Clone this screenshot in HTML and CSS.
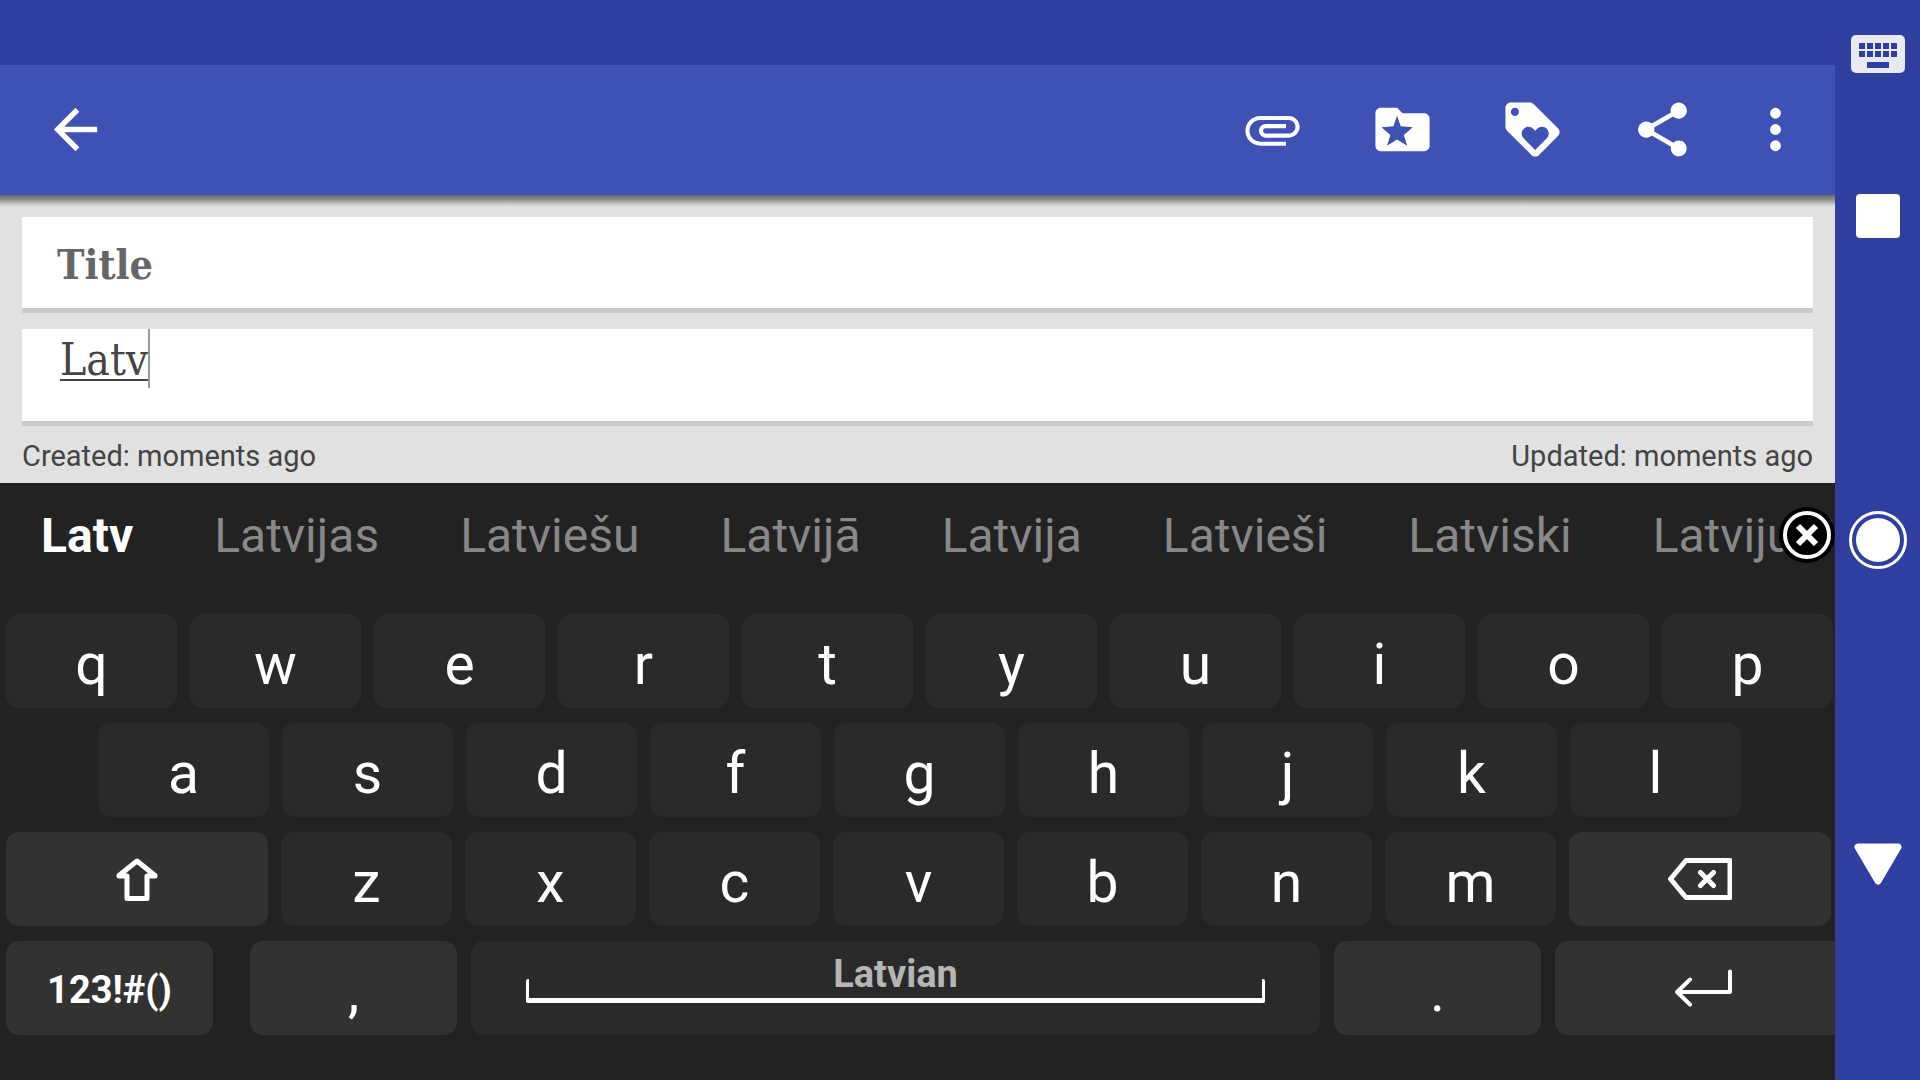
FILE: index.html
```html
<!DOCTYPE html>
<html lang="en">
<head>
<meta charset="utf-8">
<title>Note editor</title>
<link rel="stylesheet" href="styles.css">
</head>
<body>
<div class="device">
  <div class="screen">
    <div class="status-bar"></div>
    <header class="app-bar">
      <button class="bar-button back" aria-label="Back"><svg class="icon" viewBox="0 0 24 24"><path d="M20 11H7.83l5.59-5.59L12 4l-8 8 8 8 1.41-1.41L7.83 13H20v-2z"/></svg></button>
      <button class="bar-button" aria-label="Attach"><svg class="icon" viewBox="0 0 24 24"><path d="M2 12.5C2 9.46 4.46 7 7.5 7H18c2.21 0 4 1.79 4 4s-1.79 4-4 4H9.5C8.12 15 7 13.88 7 12.5S8.12 10 9.5 10H17v1.500H9.410c-1.200 0-1.200 2 0 2H18c1.380 0 2.500-1.120 2.500-2.500S19.380 8.500 18 8.500H7.500c-2.210 0-4 1.790-4 4s1.790 4 4 4H17V18H7.500C4.460 18 2 15.540 2 12.500z"/></svg></button>
      <button class="bar-button" aria-label="Folder"><svg class="icon" viewBox="0 0 24 24"><path fill-rule="evenodd" d="M20 6h-8l-2-2H4c-1.100 0-2 .9-2 2v12c0 1.100.9 2 2 2h16c1.100 0 2-.9 2-2V8c0-1.100-.9-2-2-2zM10 6.900l1.350 3.900 4.450.4-3.300 2.800 1.200 4L10 15.700 6.300 18l1.200-4-3.300-2.800 4.450-.4z"/></svg></button>
      <button class="bar-button" aria-label="Tags"><svg class="icon" viewBox="0 0 24 24"><path d="M21.41 11.58l-9-9C12.05 2.22 11.55 2 11 2H4c-1.1 0-2 .9-2 2v7c0 .55.22 1.05.59 1.42l9 9c.36.36.86.58 1.41.58.55 0 1.05-.22 1.41-.59l7-7c.37-.36.59-.86.59-1.41 0-.55-.23-1.06-.59-1.42zM5.500 7C4.670 7 4 6.330 4 5.500S4.670 4 5.500 4 7 4.670 7 5.500 6.330 7 5.500 7zm11.770 8.270L13 19.540l-4.270-4.270C8.280 14.810 8 14.190 8 13.500c0-1.380 1.120-2.500 2.500-2.500.69 0 1.320.28 1.770.74l.73.72.73-.73c.45-.45 1.080-.73 1.770-.73 1.380 0 2.500 1.120 2.500 2.500 0 .69-.28 1.320-.73 1.770z"/></svg></button>
      <button class="bar-button" aria-label="Share"><svg class="icon" viewBox="0 0 24 24"><path d="M18 16.080c-.76 0-1.440.3-1.960.77L8.910 12.700c.05-.23.09-.46.09-.7s-.04-.47-.09-.7l7.050-4.110c.54.5 1.250.81 2.040.81 1.660 0 3-1.340 3-3s-1.340-3-3-3-3 1.340-3 3c0 .24.04.47.09.7L8.040 9.810C7.500 9.310 6.790 9 6 9c-1.660 0-3 1.340-3 3s1.340 3 3 3c.79 0 1.500-.31 2.040-.81l7.120 4.160c-.05.21-.08.43-.08.65 0 1.610 1.310 2.920 2.920 2.920s2.920-1.310 2.920-2.920-1.310-2.920-2.920-2.920z"/></svg></button>
      <button class="bar-button more" aria-label="More options"><svg class="icon" viewBox="0 0 24 24"><circle cx="12" cy="6" r="2"/><circle cx="12" cy="12" r="2"/><circle cx="12" cy="18" r="2"/></svg></button>
    </header>
    <main class="note">
      <input class="field title" type="text" placeholder="Title" aria-label="Title">
      <div class="body-wrap">
        <textarea class="field body" rows="1" spellcheck="false" aria-label="Note">Latv</textarea>
        <span class="caret"></span>
      </div>
      <div class="dates"><span>Created: moments ago</span><span>Updated: moments ago</span></div>
    </main>
    <section class="keyboard" aria-label="Keyboard">
      <div class="suggestions">
        <button class="word typed">Latv</button>
        <button class="word">Latvijas</button>
        <button class="word">Latviešu</button>
        <button class="word">Latvijā</button>
        <button class="word">Latvija</button>
        <button class="word">Latvieši</button>
        <button class="word">Latviski</button>
        <button class="word">Latviju</button>
        <button class="dismiss" aria-label="Dismiss suggestions"><svg viewBox="0 0 56 56"><circle cx="28" cy="28" r="28" fill="#000"/><circle cx="28" cy="28" r="22" fill="none" stroke="#fff" stroke-width="4"/><path d="M19 19l18 18M37 19L19 37" stroke="#fff" stroke-width="6"/></svg></button>
      </div>
      <div class="row row-top">
        <button class="key">q</button><button class="key">w</button><button class="key">e</button><button class="key">r</button><button class="key">t</button><button class="key">y</button><button class="key">u</button><button class="key">i</button><button class="key">o</button><button class="key">p</button>
      </div>
      <div class="row row-home">
        <button class="key">a</button><button class="key">s</button><button class="key">d</button><button class="key">f</button><button class="key">g</button><button class="key">h</button><button class="key">j</button><button class="key">k</button><button class="key">l</button>
      </div>
      <div class="row row-shift">
        <button class="key wide function" aria-label="Shift"><svg class="line shift" viewBox="0 0 42 43"><path d="M21 3L39 17.500V18H31V40.500H11V18H3V17.500Z"/></svg></button>
        <button class="key">z</button><button class="key">x</button><button class="key">c</button><button class="key">v</button><button class="key">b</button><button class="key">n</button><button class="key">m</button>
        <button class="key wide function" aria-label="Backspace"><svg class="line backspace" viewBox="0 0 64 42"><path d="M62 2.500H18L2.500 21 18 39.500H62ZM32.500 14.500l13 13M45.500 14.500l-13 13"/></svg></button>
      </div>
      <div class="row row-space">
        <button class="key side function symbols">123!#()</button>
        <button class="key side function comma">,</button>
        <button class="key space"><span>Latvian</span><i class="tray"></i></button>
        <button class="key side function">.</button>
        <button class="key enter function" aria-label="Enter"><svg class="line return" viewBox="0 0 58 38"><path d="M56 2.500V23H3M16 10.500L3 23l13 12.500"/></svg></button>
      </div>
    </section>
  </div>
  <nav class="system-nav">
    <button class="nav-button" aria-label="Switch keyboard"><svg class="nav-keyboard" viewBox="0 0 54 38"><path fill="#e9e9f6" fill-rule="evenodd" d="M5 0H49a5 5 0 0 1 5 5V33a5 5 0 0 1-5 5H5a5 5 0 0 1-5-5V5a5 5 0 0 1 5-5ZM8 8v6h6V8zM16 8v6h6V8zM24 8v6h6V8zM32 8v6h6V8zM40 8v6h6V8zM8 16v6h6v-6zM16 16v6h6v-6zM24 16v6h6v-6zM32 16v6h6v-6zM40 16v6h6v-6zM16 27v6h22v-6z"/></svg></button>
    <button class="nav-button" aria-label="Recent apps"><svg class="nav-square" viewBox="0 0 44 44"><rect width="44" height="44" rx="4"/></svg></button>
    <button class="nav-button" aria-label="Home"><svg class="nav-home" viewBox="0 0 58 58"><circle cx="29" cy="29" r="22"/><circle cx="29" cy="29" r="27.500" fill="none" stroke="#fff" stroke-width="3"/></svg></button>
    <button class="nav-button" aria-label="Hide keyboard"><svg class="nav-back" viewBox="0 0 48 42"><path d="M4 4H44L24 38Z" stroke="#fff" stroke-width="7" stroke-linejoin="round"/></svg></button>
  </nav>
</div>
</body>
</html>
```
FILE: styles.css
```css
* { box-sizing: border-box; }

body {
  margin: 0;
  font-family: Roboto, "Noto Sans", sans-serif;
  background: #222;
}

button {
  margin: 0;
  padding: 0;
  border: 0;
  background: none;
  color: inherit;
  font: inherit;
}

svg { display: block; fill: #fff; }

.device { display: flex; min-height: 100vh; }

.screen {
  flex: 1;
  min-width: 0;
  display: flex;
  flex-direction: column;
}

.status-bar { height: 65px; background: #303f9f; }

.app-bar {
  position: relative;
  display: flex;
  height: 130px;
  padding: 0 11px 1px 0;
  background: #3f51b5;
}

.app-bar::after {
  content: "";
  position: absolute;
  top: 100%;
  left: 0;
  right: 0;
  height: 12px;
  background: linear-gradient(rgba(0, 0, 0, .54), rgba(0, 0, 0, .36) 40%, rgba(0, 0, 0, .08) 80%, transparent);
}

.bar-button {
  display: flex;
  align-items: center;
  justify-content: center;
  width: 130px;
}

.bar-button.back { width: 151px; margin-right: auto; }
.bar-button.more { width: 97px; }
.icon { width: 65px; height: 65px; }

.note {
  display: flex;
  flex-direction: column;
  gap: 16px;
  padding: 22px 22px 0;
  background: #e1e1e1;
}

.field {
  display: block;
  width: 100%;
  margin: 0;
  border: 0;
  border-bottom: 5px solid #cacaca;
  border-radius: 0;
  outline: 0;
  background: #fff;
  color: #444;
  font-family: "DejaVu Serif Condensed", "DejaVu Serif", serif;
}

.title {
  height: 96px;
  padding: 4px 35px 0;
  font-size: 41px;
  font-weight: bold;
}

.title::placeholder { color: #666; opacity: 1; }

.body-wrap { position: relative; }

.body {
  height: 97px;
  padding: 0 38px;
  font-size: 44px;
  line-height: 62px;
  resize: none;
  overflow: hidden;
  text-decoration: underline 2px;
  text-underline-offset: 4px;
}

.caret {
  position: absolute;
  top: 0;
  left: 126px;
  width: 2px;
  height: 59px;
  background: #999;
}

.dates {
  display: flex;
  justify-content: space-between;
  height: 57px;
  margin-top: -16px;
  color: #444;
  font-size: 29px;
  line-height: 60px;
}

.keyboard {
  flex: 1;
  display: flex;
  flex-direction: column;
  gap: 15px;
  padding-bottom: 45px;
  background: #222;
  color: #fff;
}

.suggestions {
  position: relative;
  display: flex;
  gap: 81px;
  height: 116px;
  padding-left: 41px;
  overflow: hidden;
  color: #888;
  font-size: 48px;
  line-height: 106px;
}

.word { flex: none; height: 106px; }
.word.typed { color: #fff; font-weight: bold; }

.dismiss {
  position: absolute;
  top: 24px;
  right: 0;
  width: 56px;
  height: 56px;
}

.row { display: flex; gap: 13px; height: 94px; }
.row-top { padding: 0 2px 0 6px; }
.row-home { padding: 0 94px 0 98px; }
.row-shift { padding: 0 4px 0 6px; }
.row-space { gap: 14px; padding-left: 6px; }

.key {
  flex: 171 1 0;
  display: flex;
  align-items: center;
  justify-content: center;
  min-width: 0;
  padding-top: 8px;
  border-radius: 13px;
  background: #2a2a2a;
  font-size: 57px;
  line-height: 64px;
}

.function { background: #323232; }
.wide { flex-grow: 262; padding-top: 0; }
.side { flex-grow: 207; }
.comma { margin-left: 23px; }
.symbols { padding-top: 4px; font-size: 38px; font-weight: bold; }

.space {
  flex-grow: 849;
  flex-direction: column;
  justify-content: flex-start;
  padding-top: 14px;
  color: #b5b5b5;
  font-size: 38px;
  font-weight: bold;
  line-height: 38px;
}

.tray {
  align-self: stretch;
  height: 24px;
  margin: -14px 55px 0;
  border: solid #fff;
  border-width: 0 3px 5px;
  border-radius: 2px;
}

.enter {
  flex-grow: 280;
  padding-top: 0;
  border-radius: 13px 0 0 13px;
}

.line {
  fill: none;
  stroke: #fff;
  stroke-width: 4;
  stroke-linecap: round;
  stroke-linejoin: round;
}

.shift { width: 42px; height: 43px; stroke-width: 5; }
.backspace { width: 64px; height: 42px; stroke-width: 5; }
.return { width: 58px; height: 38px; margin-left: 16px; }

.system-nav {
  display: grid;
  grid-template-rows: 1fr 2fr 4fr 2fr 1fr;
  width: 85px;
  background: #303f9f;
}

.nav-button { display: flex; align-items: center; justify-content: center; }
.nav-keyboard { width: 54px; height: 38px; }
.nav-square { width: 44px; height: 44px; }
.nav-home { width: 58px; height: 58px; }
.nav-back { width: 48px; height: 42px; }
```
